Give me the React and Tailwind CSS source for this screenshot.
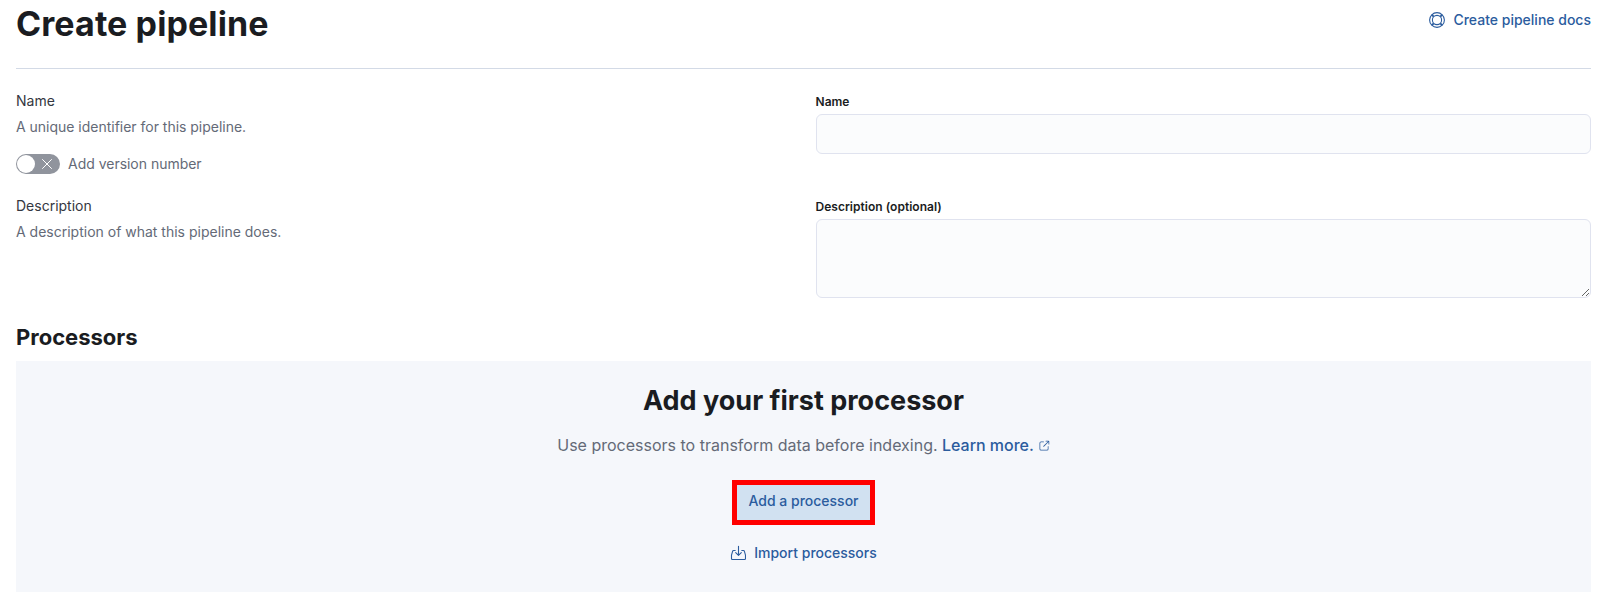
import React from "react";

const HelpIcon = () => (
  <svg width="16" height="16" viewBox="0 0 16 16" fill="none" stroke="currentColor" strokeWidth="1.1">
    <circle cx="8" cy="8" r="7.4" />
    <circle cx="8" cy="8" r="4.6" />
    <path strokeWidth="1.9" d="M2.7 2.7l2 2M13.3 2.7l-2 2M2.7 13.3l2-2M13.3 13.3l-2-2" />
  </svg>
);

const PopoutIcon = () => (
  <svg width="12" height="12" viewBox="0 0 16 16" fill="currentColor">
    <path d="M13 8.5a.5.5 0 1 1 1 0V12a2 2 0 0 1-2 2H4a2 2 0 0 1-2-2V4a2 2 0 0 1 2-2h3.5a.5.5 0 0 1 0 1H4a1 1 0 0 0-1 1v8a1 1 0 0 0 1 1h8a1 1 0 0 0 1-1V8.5Zm-5.12.339a.5.5 0 1 1-.706-.707L13.305 2H10.5a.5.5 0 1 1 0-1H14a1 1 0 0 1 1 1v3.5a.5.5 0 1 1-1 0V2.72L7.88 8.838Z" />
  </svg>
);

const ImportIcon = () => (
  <svg width="16" height="16" viewBox="0 0 16 16" fill="none" stroke="currentColor" strokeWidth="1.1" strokeLinecap="round" strokeLinejoin="round">
    <path d="M8.5 1.2v9M5.7 7.6l2.8 2.8 2.8-2.8" />
    <path d="M5.2 5.5H3.6a1 1 0 0 0-1 .8L1.5 10.2v3.4a.9.9 0 0 0 .9.9h12.2a.9.9 0 0 0 .9-.9v-3.4l-1.1-3.9a1 1 0 0 0-1-.8h-1.6" />
  </svg>
);

const Field = ({ label, children }) => (
  <div className="flex flex-1 flex-col">
    <label className="mb-[3px] h-[18px] text-xs leading-[18px] font-semibold tracking-[0.02px] text-[#1a1c21]">{label}</label>
    {children}
  </div>
);

export default function App() {
  return (
    <div className="flex h-[592px] flex-col overflow-hidden bg-white pr-[7px] pl-4 font-['Inter',sans-serif] text-sm text-[#646a77]">
      <header className="flex h-[69px] shrink-0 items-start justify-between border-b border-[#d3dae6] pt-1">
        <h1 className="text-[34px] leading-10 font-bold tracking-[0.1px] text-[#1a1c21]">Create pipeline</h1>
        <a className="flex h-8 items-center gap-2 font-medium text-[#2b5c9e]">
          <HelpIcon />
          Create pipeline docs
        </a>
      </header>

      <section className="flex h-[105px] shrink-0 gap-6 pt-6">
        <div className="flex-1 -mt-[2px]">
          <h3 className="leading-[20px] text-[#343741]">Name</h3>
          <p className="mt-[5px] leading-[21px] tracking-[-0.015px]">A unique identifier for this pipeline.</p>
          <div className="mt-[17px] flex h-5 items-center gap-2">
            <span className="flex h-5 w-11 items-center justify-between rounded-full bg-[#90949d] pr-2 pl-px">
              <span className="size-[18px] rounded-full bg-white" />
              <svg width="10" height="10" viewBox="0 0 10 10" stroke="white" strokeWidth="1" strokeLinecap="round">
                <path d="M.5.5l9 9M9.5.5l-9 9" />
              </svg>
            </span>
            <span className="leading-5 tracking-[-0.02px]">Add version number</span>
          </div>
        </div>
        <Field label="Name">
          <input className="h-10 w-full rounded-md border border-[#e0e3ef] bg-[#fbfcfd] outline-none" />
        </Field>
      </section>

      <section className="flex h-[149px] shrink-0 gap-6 pt-6">
        <div className="flex-1 -mt-[2px]">
          <h3 className="leading-[20px] text-[#343741]">Description</h3>
          <p className="mt-[5px] leading-[21px]">A description of what this pipeline does.</p>
        </div>
        <Field label="Description (optional)">
          <textarea className="h-[79px] w-full resize rounded-md border border-[#e0e3ef] bg-[#fbfcfd] outline-none" />
        </Field>
      </section>

      <h2 className="h-[38px] shrink-0 text-[22px] leading-[28px] font-bold text-[#1a1c21]">Processors</h2>

      <section className="flex flex-1 flex-col items-center bg-[#f5f7fb] pt-6">
        <h2 className="text-[27px] leading-8 font-bold text-[#1a1c21]">Add your first processor</h2>
        <p className="mt-4 flex items-center text-base leading-6">
          Use processors to transform data before indexing.&nbsp;
          <a className="flex items-center gap-1 font-medium tracking-[-0.03px] text-[#2b5c9e]">
            Learn more.
            <span className="pt-[2px]">
              <PopoutIcon />
            </span>
          </a>
        </p>
        <button className="mt-[22.5px] mr-px h-[45px] w-[143px] border-5 border-[#ff0000] bg-[#d1e1f1] pb-[2px] pl-px text-sm font-medium text-[#2b5c9e]">
          Add a processor
        </button>
        <button className="mt-[16.5px] flex h-6 items-center gap-2 font-medium text-[#2b5c9e]">
          <ImportIcon />
          Import processors
        </button>
      </section>
    </div>
  );
}
